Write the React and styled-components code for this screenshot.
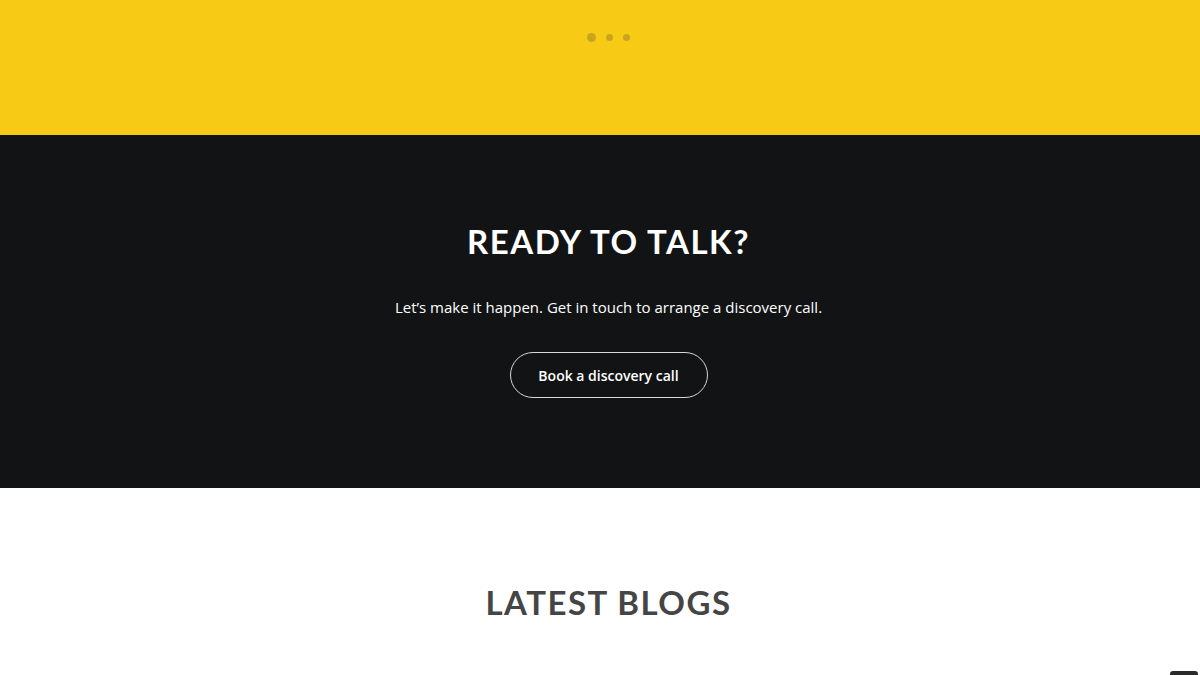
import styled, { createGlobalStyle } from "styled-components";

const GlobalStyle = createGlobalStyle`
  body {
    margin: 0;
    font-family: "Open Sans", "Liberation Sans", sans-serif;
    background: #fff;
  }
`;

// content sits a bit right of the viewport centre in the reference
const Section = styled.section`
  display: flex;
  flex-direction: column;
  align-items: center;
  box-sizing: border-box;
  padding-left: 17px;
`;
const Banner = styled(Section)`
  height: 135px;
  background: #f7cb15;
  padding-top: 33px;
`;
const Dots = styled.div`
  display: flex;
  align-items: center;
  gap: 10px;
`;
const Dot = styled.span`
  width: ${(p) => (p.$active ? 9 : 7)}px;
  height: ${(p) => (p.$active ? 9 : 7)}px;
  border-radius: 50%;
  background: #c9a41f;
`;
const Cta = styled(Section)`
  height: 353px;
  background: #121315;
  padding-top: 86px;
`;
const Heading = styled.h2`
  margin: 0;
  font-family: "Lato", "Open Sans", sans-serif;
  font-weight: 700;
  font-size: 33px;
  letter-spacing: 1.5px;
  line-height: 40px;
  color: ${(p) => p.$color};
`;
const Lead = styled.p`
  margin: 35px 0 0;
  font-size: 15px;
  line-height: 22px;
  color: #fff;
`;
const OutlineBtn = styled.button`
  margin-top: 34px;
  width: 198px;
  height: 46px;
  border: 1px solid #d8d8d8;
  border-radius: 23px;
  background: transparent;
  color: #fff;
  font-family: "Open Sans", sans-serif;
  font-weight: 600;
  font-size: 14px;
  cursor: pointer;
`;
const Blogs = styled(Section)`
  padding-top: 94px;
  height: 187px;
`;
const ToTop = styled.div`
  position: fixed;
  right: 2px;
  bottom: -30px;
  width: 28px;
  height: 34px;
  border-radius: 3px;
  background: #2a2a2a;
`;

export default function App() {
  return (
    <>
      <GlobalStyle />
      <Banner>
        <Dots>
          <Dot $active />
          <Dot />
          <Dot />
        </Dots>
      </Banner>
      <Cta>
        <Heading $color="#fff">READY TO TALK?</Heading>
        <Lead>Let’s make it happen. Get in touch to arrange a discovery call.</Lead>
        <OutlineBtn>Book a discovery call</OutlineBtn>
      </Cta>
      <Blogs>
        <Heading $color="#454545">LATEST BLOGS</Heading>
      </Blogs>
      <ToTop />
    </>
  );
}
